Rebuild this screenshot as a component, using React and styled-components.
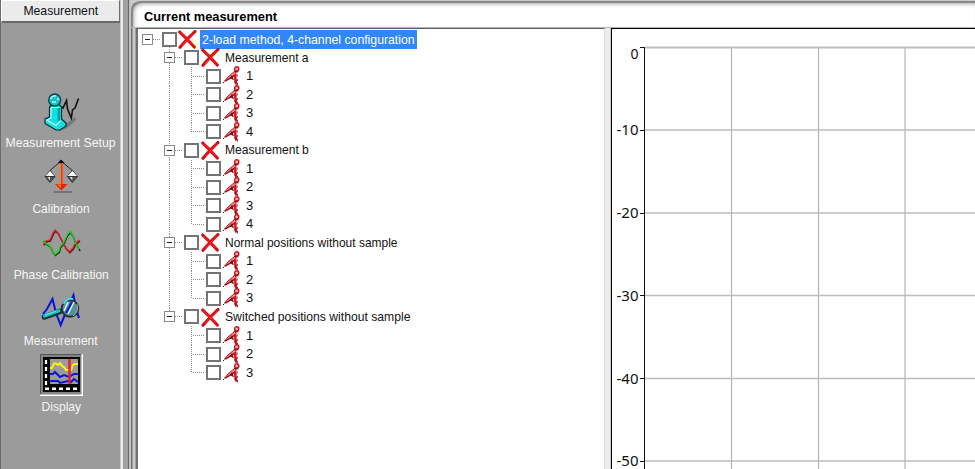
import React from "react";
import styled, { createGlobalStyle } from "styled-components";

const GlobalStyle = createGlobalStyle`
  * { box-sizing: border-box; }
  html, body, #root { height: 100%; margin: 0; }
  body { overflow: hidden; background: #fff; font: 13px/16px "Liberation Sans", Arial, sans-serif; color: #111; }
  svg { display: block; }
`;

const Window = styled.div`
  display: flex;
  width: 975px;
  height: 469px;
  overflow: hidden;
`;

const Sidebar = styled.aside`
  flex: none;
  width: 120px;
  background: #9b9b9b;
  border-left: 1px solid #6c6c6c;
`;

const SidebarHeader = styled.button`
  display: flex;
  align-items: center;
  justify-content: center;
  width: 119px;
  height: 23px;
  padding: 0 0 1px;
  border: solid;
  border-width: 1px 1px 2px 1px;
  border-color: #fff #6e6e6e #696969 #fff;
  background: #ebebeb;
  color: #111;
  font: inherit;
`;

const SidebarItems = styled.nav`
  display: flex;
  flex-direction: column;
  align-items: center;
  padding: 67px 0 0 1px;
`;

const SidebarItem = styled.div`
  display: flex;
  flex-direction: column;
  align-items: center;
  height: 66px;
  color: #f6f6f6;
`;

const IconFrame = styled.div`
  width: 43px;
  height: 42px;
`;

const ItemLabel = styled.div`
  height: 22px;
  line-height: 22px;
`;

const FitText = styled.span`
  display: inline-block;
  white-space: nowrap;
  transform: scaleX(${(p) => p.$scale});
  transform-origin: ${(p) => p.$origin || "center"};
`;

const Splitter = styled.div`
  flex: none;
  width: 11px;
  background: linear-gradient(
    90deg,
    #c4c4c4 0 1px, #f1f1f1 1px 2px, #e4e4e4 2px 3px,
    #a0a0a0 3px 8px, #686868 8px 9px, #c2c2c2 9px 11px
  );
`;

const Main = styled.main`
  display: flex;
  flex: 1;
  flex-direction: column;
  min-width: 0;
  background: #c9cbc9;
`;

const TitleBar = styled.header`
  flex: none;
  height: 28px;
  padding: 8px 0 0 13px;
  border-top: 1px solid #c9cbc9;
  border-bottom: 1px solid #b5b5b5;
  border-top-left-radius: 9px;
  background: #fff;
  box-shadow: inset 2px 2px 1px #858885, inset 3px 3px 4px #aaa;
  color: #000;
  font-weight: bold;
`;

const Content = styled.div`
  display: flex;
  flex: 1;
  min-height: 0;
`;

const LeftEdge = styled.div`
  flex: none;
  width: 5px;
  background: linear-gradient(90deg, #747474 0 1px, #999 1px 2px, #c9c9c9 2px 4px, #a0a0a0 4px 5px);
`;

const TreePanel = styled.section`
  flex: none;
  width: 469px;
  padding-top: 1px;
  border-top: 1px solid #606060;
  border-left: 2px solid #707070;
  border-right: 1px solid #dcdcdc;
  background: #fff;
`;

const Gap = styled.div`
  flex: none;
  width: 6px;
  border-right: 1px solid #d0d0d0;
  background: #ececec;
`;

const ChartPanel = styled.section`
  flex: 1;
  min-width: 0;
  border-top: 1px solid #000;
  border-left: 1px solid #000;
  background: #fff;
`;

const vDots = "repeating-linear-gradient(180deg, #8c8c8c 0 1px, transparent 1px 2px)";

const trunk = {
  full: `${vDots} 31px 0 / 1px 100% no-repeat`,
  upper: `${vDots} 31px 0 / 1px 50% no-repeat`,
  lower: `${vDots} 31px 100% / 1px 50% no-repeat`,
};

const Row = styled.div`
  display: flex;
  align-items: center;
  height: 18.52px;
  padding-left: ${(p) => p.$indent}px;
  background: ${(p) => trunk[p.$trunk] || "none"};
`;

const Guide = styled.span`
  flex: none;
  align-self: stretch;
  width: 1px;
  margin-right: 1px;
  background: ${vDots} top / 1px ${(p) => (p.$half ? "50%" : "100%")} no-repeat;
`;

const Branch = styled.span`
  flex: none;
  width: ${(p) => p.$w}px;
  height: 1px;
  margin-right: 1px;
  background: repeating-linear-gradient(90deg, #8c8c8c 0 1px, transparent 1px 2px);
`;

const Expander = styled.span`
  display: flex;
  flex: none;
  align-items: center;
  justify-content: center;
  width: 11px;
  height: 11px;
  border: 1px solid #8a8a8a;
  background: #fff;
  &::after { content: ""; width: 5px; height: 1px; background: #222; }
`;

const Checkbox = styled.span`
  flex: none;
  width: 15px;
  height: 15px;
  border: 2px solid #747474;
  background: #fff;
`;

const Label = styled.span`
  flex: none;
  height: 18px;
  line-height: 18px;
  margin-left: ${(p) => p.$gap}px;
`;

const Selected = styled(Label)`
  width: 217px;
  height: 19px;
  padding-left: 2px;
  line-height: 19px;
  background: #3187f7;
  color: #fff;
`;

const CrossSvg = styled.svg`
  flex: none;
  margin-left: ${(p) => p.$gap}px;
`;

const RedCross = ({ gap }) => (
  <CrossSvg $gap={gap} width="19" height="19" viewBox="0 0 19 19">
    <path d="M1.7 2L8.5 8.6L16.3 17M17 1.5L9.5 8.8L2 17.3" stroke="#d20c12" strokeWidth="3.1" strokeLinecap="round" fill="none" />
    <path d="M2.5 2.5L15 15M16 3L4 15.5" stroke="#f51c22" strokeWidth="1.4" fill="none" />
  </CrossSvg>
);

const SensorSvg = styled.svg`
  flex: none;
  margin: 0 0 0 2px;
  overflow: visible;
`;

const SensorIcon = () => (
  <SensorSvg width="18" height="18" viewBox="0 0 18 18">
    <path d="M1.5 14.2L5 10L12 4L13.2 6.5L8 10.5Z" fill="#f58d93" stroke="#c4121b" strokeWidth="1" />
    <path d="M2 14.3L8 11L13 7.4" stroke="#96131a" strokeWidth="1.1" fill="none" />
    <path d="M7 11L9 8.5L10.5 12.8L7.5 11Z" fill="#7d1117" stroke="#4a0d10" strokeWidth="0.6" />
    <path d="M12.2 7.5L12.4 12.5L13.4 17.5" stroke="#e60c18" strokeWidth="2.5" fill="none" />
    <path d="M14.2 7.5V9.5M14.3 12V14M14.3 16V18.5M12 14V16" stroke="#34090c" strokeWidth="0.8" />
    <circle cx="13.7" cy="1.9" r="2.1" fill="#f3b4b8" stroke="#cf1018" strokeWidth="1.4" />
    <path d="M11.5 4.7L15.5 4.9" stroke="#5c0c10" strokeWidth="1" />
    <rect x="0" y="15" width="1" height="1" fill="#222" />
  </SensorSvg>
);

const SetupIcon = () => (
  <svg width="43" height="42" viewBox="0 0 43 42">
    <path d="M21 38L27 34L36 27L37 30L28 38L20 41Z" fill="#777" />
    <path d="M22.5 17L24 18L27.5 10.5L28.5 19L32.3 28L33.5 20L36 18L39.5 8.5" fill="none" stroke="#111" strokeWidth="1.6" />
    <path d="M10.5 17L13 14.5H20L22.5 17V29L27 33V36L21 40H17L6 33.5V29L10.5 27Z" fill="#14e0e4" stroke="#082b2d" strokeWidth="1.2" />
    <path d="M12 18V28L7.5 30L17 35.5L21.5 31M12 17.5H20" fill="none" stroke="#c9ffff" strokeWidth="1.1" />
    <path d="M18.5 18H21V30L18.5 32Z" fill="#089da3" />
    <circle cx="15.7" cy="10" r="6" fill="#20bec7" stroke="#103f45" strokeWidth="1.3" />
    <path d="M11.5 9Q13 5.5 17 6M13 12H17M18 9H20" stroke="#a4ffff" strokeWidth="1.3" fill="none" />
  </svg>
);

const BalanceIcon = () => (
  <svg width="43" height="42" viewBox="0 0 43 42">
    <path d="M10 14.5L21 5L32.3 14.5M10 14.5L5.5 20M10 14.5L14.5 20M32.3 14.5L28 20M32.3 14.5L37 20" stroke="#222" strokeWidth="1" fill="none" />
    <path d="M18 7L21 3.5L24.5 7Z" fill="#080808" />
    <path d="M5.5 20L10 15L14.5 20ZM27.8 20L32.3 15L37 20Z" fill="#fff" />
    <path d="M5 20.5H15L10 26.5ZM27.3 20.5H37.5L32.3 26.5Z" fill="#555" stroke="#222" strokeWidth="0.8" />
    <path d="M7.5 21H10V24.5ZM29.8 21H32.3V24.5Z" fill="#ddd" />
    <path d="M21.3 7V30" stroke="#ff2a00" strokeWidth="2.4" />
    <path d="M20.6 8V29" stroke="#ff9b18" strokeWidth="0.8" />
    <path d="M15 28H27.5L21.3 34.5Z" fill="#f51b00" />
    <path d="M17 28.5H21V32Z" fill="#ff901a" />
    <path d="M13.5 36H32" stroke="#666" strokeWidth="1.5" />
  </svg>
);

const redWave = "M3.3 22.3L6 19L10 18L13 11L15 8L18 11L20 15L23.3 21.3L26 26L29.3 29.7L33 26L35 22L39.5 18";
const greenWave = "M3.3 18L5 21L10 24L13 30L15 32.5L19 29L20 25L24 20L27 13L30 9.5L33 14L35 20L39 27";

const PhaseIcon = () => (
  <svg width="43" height="42" viewBox="0 0 43 42" fill="none">
    <path d={redWave} stroke="#401818" strokeWidth="1.4" transform="translate(.5 1)" />
    <path d={greenWave} stroke="#123510" strokeWidth="1.4" transform="translate(.5 1)" />
    <path d={redWave} stroke="#e51a20" strokeWidth="1.3" />
    <path d={greenWave} stroke="#18d51b" strokeWidth="1.3" />
    <path d="M39 28.5H40.5" stroke="#111" />
  </svg>
);

const MagnifierIcon = () => (
  <svg width="43" height="42" viewBox="0 0 43 42">
    <path d="M4 26L8 21L13.5 11L17 25L21.7 37L27 24L34.5 7L37 20L40 30" fill="none" stroke="#0713dd" strokeWidth="2" />
    <path d="M5.5 29L21 23.3" stroke="#0b3034" strokeWidth="5.5" strokeLinecap="round" />
    <path d="M5.5 28L20 22.8" stroke="#16c5ce" strokeWidth="3.2" strokeLinecap="round" />
    <path d="M6 26.9L17 23" stroke="#89eff1" strokeWidth="0.8" />
    <circle cx="31" cy="20.5" r="8.3" fill="#52929c" stroke="#263033" strokeWidth="2" />
    <path d="M24.5 16Q28 9.5 34 11" stroke="#4fd8df" strokeWidth="2" fill="none" />
    <path d="M25 23L29 14M29 26L35 14" stroke="#d9f4f4" strokeWidth="1.6" />
    <path d="M27 25L33 14" stroke="#101cce" strokeWidth="2" />
    <path d="M38 16Q40 24 34 28" stroke="#b0b0aa" strokeWidth="1" fill="none" />
  </svg>
);

const DisplayIcon = () => (
  <svg width="43" height="42" viewBox="0 0 43 42">
    <path d="M0 0H43V42H0Z" fill="#858585" />
    <path d="M.5 42V.5H43" fill="none" stroke="#555" />
    <path d="M0 41.5H42.5V0" fill="none" stroke="#fff" strokeWidth="2" />
    <rect x="3" y="3" width="37" height="35" fill="#050505" />
    <rect x="10" y="5" width="28" height="25" fill="#9b9b9b" />
    <path d="M6 6V32" stroke="#fff" strokeWidth="2.2" strokeDasharray="4 3" />
    <path d="M5 34.7H38" stroke="#fff" strokeWidth="2.4" strokeDasharray="4 3" />
    <path d="M10 14L12 14L14 9.5H16L18 11L20 9L22 12L24 13L26 16H31L33 11L35 10H38" stroke="#fff30a" strokeWidth="2" fill="none" />
    <path d="M10 20H13L15 18L18 21L20 23L24 21L29 23L34 20H38M10 27H18L20 29L28 27L31 28L34 25L38 28" stroke="#0714dc" strokeWidth="2" fill="none" />
    <path d="M29.5 5V30" stroke="#ef1820" strokeWidth="2.4" />
  </svg>
);

const sidebarItems = [
  { label: "Measurement Setup", scale: 0.94, Icon: SetupIcon },
  { label: "Calibration", scale: 0.92, Icon: BalanceIcon },
  { label: "Phase Calibration", scale: 0.925, Icon: PhaseIcon },
  { label: "Measurement", scale: 0.93, Icon: MagnifierIcon },
  { label: "Display", scale: 0.93, Icon: DisplayIcon },
];

const groups = [
  { label: "Measurement a", scale: 0.925, channels: [1, 2, 3, 4] },
  { label: "Measurement b", scale: 0.928, channels: [1, 2, 3, 4] },
  { label: "Normal positions without sample", scale: 0.922, channels: [1, 2, 3] },
  { label: "Switched positions without sample", scale: 0.937, channels: [1, 2, 3] },
];

const GroupRows = ({ group, last }) => (
  <>
    <Row $indent={26} $trunk={last ? "upper" : "full"}>
      <Expander />
      <Branch $w={8} />
      <Checkbox />
      <RedCross gap={2} />
      <Label $gap={4.5}>
        <FitText $scale={group.scale} $origin="left">{group.label}</FitText>
      </Label>
    </Row>
    {group.channels.map((n, i) => (
      <Row key={n} $indent={53} $trunk={last ? "none" : "full"}>
        <Guide $half={i === group.channels.length - 1} />
        <Branch $w={12} />
        <Checkbox />
        <SensorIcon />
        <Label $gap={5}>{n}</Label>
      </Row>
    ))}
  </>
);

const gridX = [731.5, 818.5, 905];
const gridY = [47.5, 130, 213, 295.5, 378.5, 461];

const AxisText = styled.text`
  font: 14px "Noto Sans", sans-serif;
  fill: #111;
  text-anchor: end;
`;

const Chart = () => (
  <svg width="363" height="440" viewBox="612 29 363 440">
    {gridX.map((x) => (
      <path key={x} d={`M${x} 47V469`} stroke="#b4b4b4" strokeWidth="1.2" />
    ))}
    {gridY.map((y, i) => (
      <g key={y}>
        <path d={`M645 ${y}H975`} stroke="#bdbdbd" strokeWidth={i ? 1.3 : 2} />
        <path d={`M640 ${Math.floor(y) + 0.5}H645`} stroke="#111" />
        <AxisText x="638.5" y={i ? y + 5 : 59} textLength={i ? 22 : undefined} lengthAdjust="spacingAndGlyphs">
          {i ? `-${i * 10}` : "0"}
        </AxisText>
      </g>
    ))}
    <path d="M644.5 47V469" stroke="#111" />
  </svg>
);

export default function App() {
  return (
    <>
      <GlobalStyle />
      <Window>
        <Sidebar>
          <SidebarHeader>
            <FitText $scale={0.94}>Measurement</FitText>
          </SidebarHeader>
          <SidebarItems>
            {sidebarItems.map(({ label, scale, Icon }) => (
              <SidebarItem key={label}>
                <IconFrame><Icon /></IconFrame>
                <ItemLabel><FitText $scale={scale}>{label}</FitText></ItemLabel>
              </SidebarItem>
            ))}
          </SidebarItems>
        </Sidebar>
        <Splitter />
        <Main>
          <TitleBar>
            <FitText $scale={0.985} $origin="left">Current measurement</FitText>
          </TitleBar>
          <Content>
            <LeftEdge />
            <TreePanel>
              <Row $indent={4} $trunk="lower">
                <Expander />
                <Branch $w={8} />
                <Checkbox />
                <RedCross gap={1} />
                <Selected $gap={3}>
                  <FitText $scale={0.943} $origin="left">2-load method, 4-channel configuration</FitText>
                </Selected>
              </Row>
              {groups.map((group, i) => (
                <GroupRows key={group.label} group={group} last={i === groups.length - 1} />
              ))}
            </TreePanel>
            <Gap />
            <ChartPanel><Chart /></ChartPanel>
          </Content>
        </Main>
      </Window>
    </>
  );
}
